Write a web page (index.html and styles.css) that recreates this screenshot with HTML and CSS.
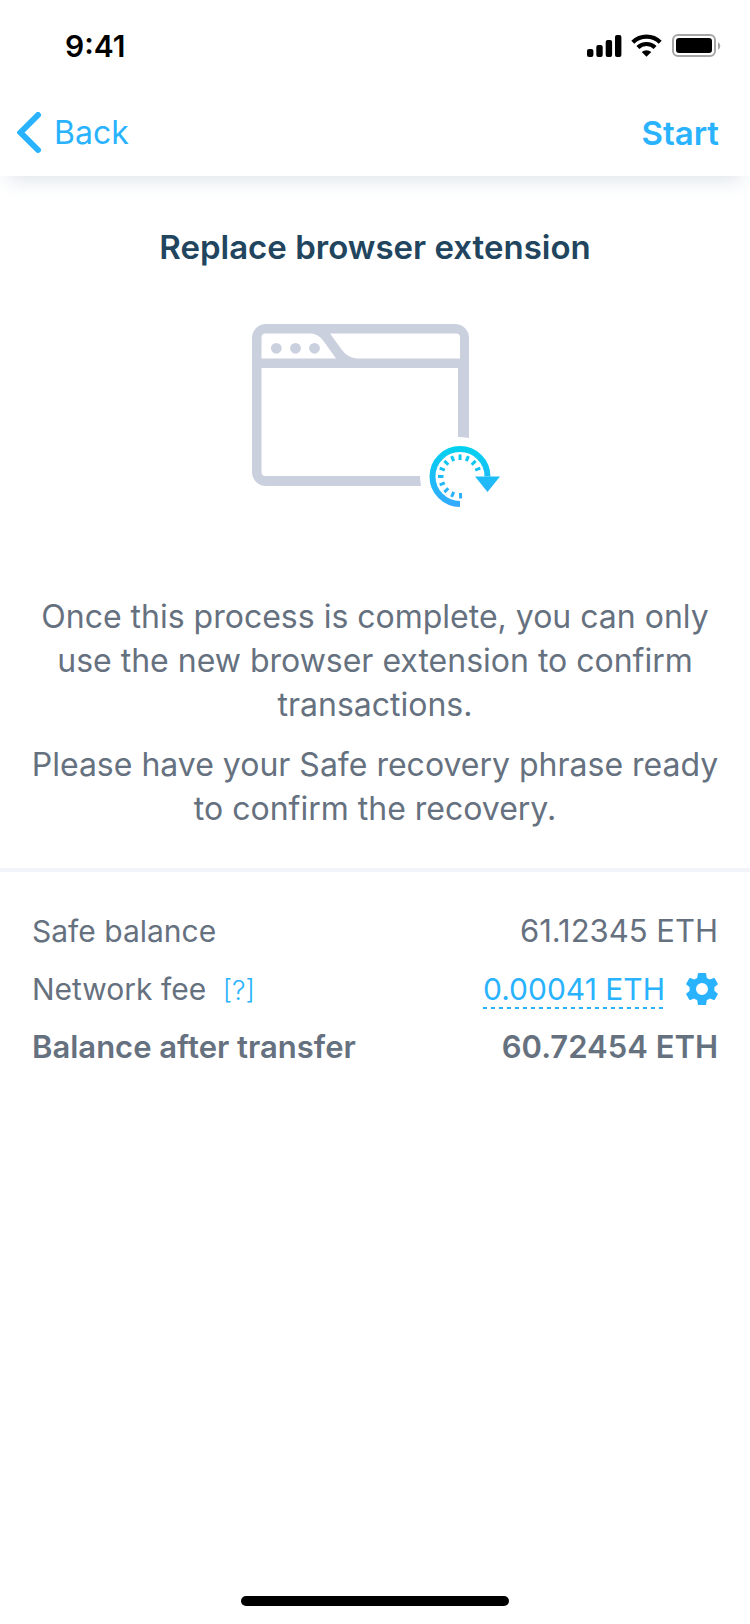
FILE: index.html
```html
<!DOCTYPE html>
<html lang="en">
<head>
<meta charset="utf-8">
<meta name="viewport" content="width=device-width, initial-scale=1">
<title>Replace browser extension</title>
<link rel="stylesheet" href="styles.css">
</head>
<body>
<div class="screen">
  <header class="header">
    <div class="status">
      <span class="time">9:41</span>
      <svg class="status-icons" width="134" height="24" viewBox="0 0 134 24" aria-hidden="true">
        <rect x="0" y="15" width="6.4" height="8" rx="2"/>
        <rect x="9.3" y="11" width="6.4" height="12" rx="2"/>
        <rect x="18.7" y="6" width="6.4" height="17" rx="2"/>
        <rect x="28" y="1" width="6.4" height="22" rx="2"/>
        <g fill="none" stroke="#000" stroke-width="4.2">
          <path d="M45.8 8.3a19.5 19.5 0 0 1 27.4 0"/>
          <path d="M50.9 13.5a12.3 12.3 0 0 1 17.2 0"/>
        </g>
        <path d="M59.5 22.8 54.7 18a7.2 7.2 0 0 1 9.6 0z"/>
        <rect x="86" y="1" width="42" height="21" rx="5" fill="none" stroke="#a6a6a6" stroke-width="2"/>
        <rect x="89" y="4" width="36" height="15" rx="3"/>
        <path d="M131 8a4.6 4.6 0 0 1 0 8z" fill="#a6a6a6"/>
      </svg>
    </div>
    <nav class="nav">
      <button class="nav-button" type="button">
        <svg width="25" height="42" viewBox="0 0 25 42" aria-hidden="true"><path d="M21 3 3.500 20.500 21 38" fill="none" stroke="currentColor" stroke-width="6" stroke-linecap="round" stroke-linejoin="miter"/></svg>
        Back
      </button>
      <button class="nav-button nav-start" type="button">Start</button>
    </nav>
  </header>

  <main class="main">
    <section class="intro">
      <h1 class="title">Replace browser extension</h1>
      <svg class="illustration" width="250" height="184" viewBox="250 324 250 184" aria-hidden="true">
        <defs>
          <linearGradient id="sync" x1="0" y1="446" x2="0" y2="507" gradientUnits="userSpaceOnUse">
            <stop offset="0" stop-color="#01d2ee"/>
            <stop offset="1" stop-color="#35a9ff"/>
          </linearGradient>
        </defs>
        <g fill="#cad0de">
          <path fill-rule="evenodd" d="M266 324H455a14 14 0 0 1 14 14V438Q463.500 437 458 437V368H261.500V472a4 4 0 0 0 4 4H420q.2 5 1 10H266a14 14 0 0 1-14-14V338a14 14 0 0 1 14-14zM265.500 333.500a4 4 0 0 0-4 4V358.500H336L323.500 341Q318.500 334 311.500 333.500zM330 333.500 342 350Q348 358 357 358.500H460V337.500a4 4 0 0 0-4-4z"/>
          <circle cx="276.300" cy="348.300" r="5.400"/>
          <circle cx="295.500" cy="348.300" r="5.400"/>
          <circle cx="314.500" cy="348.300" r="5.400"/>
        </g>
        <path d="M460 504a27.500 27.500 0 1 1 27.500-27.500" fill="none" stroke="url(#sync)" stroke-width="6"/>
        <path d="M475 476.500H500L487.500 492z" fill="url(#sync)"/>
        <path fill="none" stroke="url(#sync)" stroke-width="3" d="M460.100 454.500 460 460M468.400 456.200 466.300 461.200M475.600 460.900 471.700 464.800M480.300 468.100 475.200 470.200M451.600 456.200 453.700 461.200M444.400 460.900 448.300 464.800M439.700 468.100 444.800 470.200M438 476.500 443.500 476.600M439.700 484.900 444.800 482.800M444.400 492.100 448.300 488.200M451.600 496.800 453.700 491.800M460.500 493 460.600 498.500"/>
      </svg>
      <div class="copy">
        <p>Once this process is complete, you can only use the new browser extension to confirm transactions.</p>
        <p>Please have your Safe recovery phrase ready to confirm the recovery.</p>
      </div>
    </section>

    <dl class="summary">
      <div class="row">
        <dt>Safe balance</dt>
        <dd>61.12345 ETH</dd>
      </div>
      <div class="row">
        <dt>Network fee <button class="help" type="button" aria-label="What is the network fee?">[?]</button></dt>
        <dd class="fee">
          <a class="fee-link" href="#">0.00041 ETH</a>
          <button class="gear" type="button" aria-label="Fee settings">
            <svg width="32" height="32" viewBox="0 0 32 32" aria-hidden="true"><path fill="currentColor" fill-rule="evenodd" d="M12.600 0h6.800q.6 0 .7.600l.7 4.300q1.600.6 3 1.700l4-1.600q.6-.2.900.3l3.100 5.400q.3.500-.2.900l-3.300 2.600q.3 1.800 0 3.600l3.300 2.600q.5.400.2.900l-3.100 5.400q-.3.500-.9.300l-4-1.600q-1.400 1.100-3 1.700l-.7 4.300q-.1.600-.7.600h-6.800q-.6 0-.7-.6l-.7-4.300q-1.600-.6-3-1.700l-4 1.600q-.6.200-.9-.3L.2 21.300q-.3-.5.200-.9l3.300-2.600q-.3-1.800 0-3.600L.4 11.600q-.5-.4-.2-.9L3.300 5.300q.3-.5.900-.3l4 1.600q1.400-1.100 3-1.700l.7-4.300q.1-.6.700-.6zM16 10a6 6 0 1 0 0 12 6 6 0 0 0 0-12z"/></svg>
          </button>
        </dd>
      </div>
      <div class="row total">
        <dt>Balance after transfer</dt>
        <dd>60.72454 ETH</dd>
      </div>
    </dl>
  </main>

  <footer class="footer"><div class="home"></div></footer>
</div>
</body>
</html>
```

FILE: styles.css
```css
* {
  box-sizing: border-box;
}

body {
  margin: 0;
  background: #fff;
  color: #667180;
  font-family: Inter, "Liberation Sans", sans-serif;
  font-size: 32px;
  line-height: 44px;
}

.screen {
  min-height: 100vh;
  display: flex;
  flex-direction: column;
}

.header {
  background: #fff;
  box-shadow: 0 12px 20px -8px #dde4e9;
}

.status {
  height: 88px;
  display: flex;
  align-items: center;
  justify-content: space-between;
  padding: 4px 29px 0 65px;
}

.time {
  color: #000;
  font-size: 30px;
  font-weight: 600;
}

.nav {
  height: 88px;
  display: flex;
  align-items: center;
  justify-content: space-between;
  padding: 1px 31px 0 17px;
}

button {
  border: 0;
  padding: 0;
  background: none;
  color: #29b2fe;
  font: inherit;
  cursor: pointer;
}

svg {
  display: block;
}

.nav-button {
  display: flex;
  align-items: center;
  gap: 12px;
}

.nav-start {
  font-size: 33px;
  font-weight: 600;
}

.main {
  flex: 1;
}

.intro {
  display: flex;
  flex-direction: column;
  align-items: center;
  padding: 49px 24px 37px;
  border-bottom: 4px solid #f3f4f9;
}

.title {
  margin: 0;
  color: #21455e;
  font-size: 33px;
  font-weight: 600;
}

.illustration {
  margin: 55px 0 87px;
}

.copy {
  display: flex;
  flex-direction: column;
  gap: 16px;
  text-align: center;
}

.copy p {
  margin: 0;
}

.summary {
  display: flex;
  flex-direction: column;
  gap: 14px;
  margin: 0;
  padding: 37px 32px;
}

.row {
  display: flex;
  align-items: center;
  justify-content: space-between;
  font-size: 30px;
}

.row dd {
  margin: 0;
  font-size: 31px;
}

.row .fee {
  display: flex;
  align-items: center;
  gap: 21px;
  font-size: 30px;
}

.help {
  margin-left: 8px;
  font-size: 27px;
  font-weight: 300;
  line-height: 32px;
}

.fee-link {
  color: #29b2fe;
  line-height: 40px;
  text-decoration: none;
  background: repeating-linear-gradient(90deg, #29b2fe 0 4px, transparent 4px 8px) left bottom / 100% 2px no-repeat;
}

.total {
  font-size: 31px;
  font-weight: 600;
}

.footer {
  display: flex;
  justify-content: center;
  padding: 18px 0;
}

.home {
  width: 268px;
  height: 10px;
  border-radius: 5px;
  background: #000;
}
```
